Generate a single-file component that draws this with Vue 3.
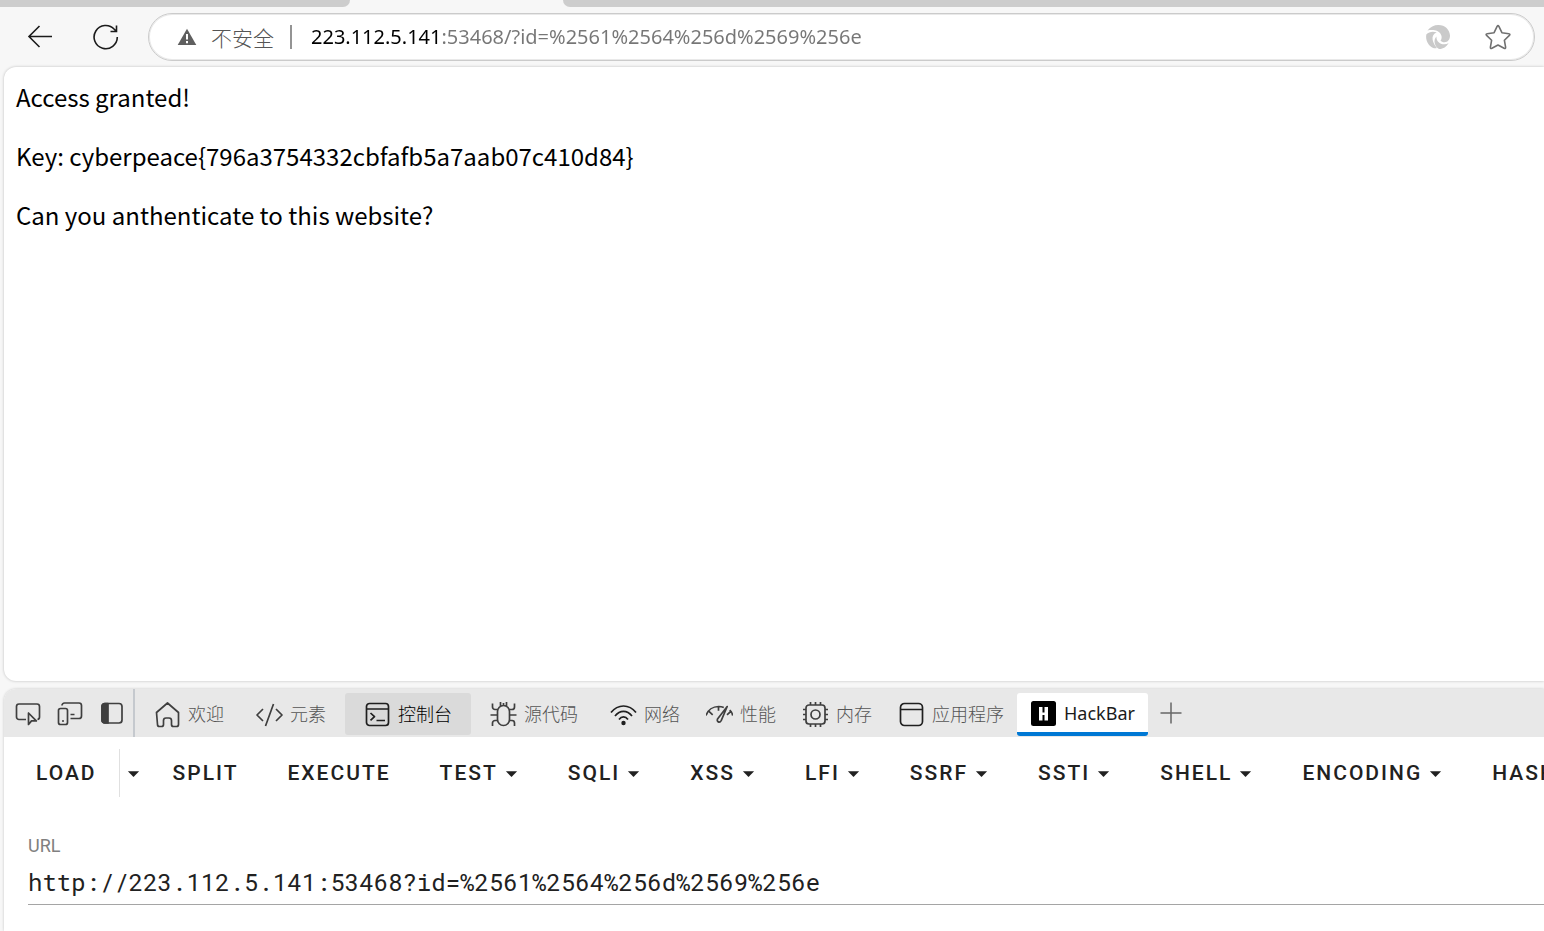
<script setup>
import { ref } from 'vue'

const address = ref('223.112.5.141:53468/?id=%2561%2564%256d%2569%256e')
const target = ref('http://223.112.5.141:53468?id=%2561%2564%256d%2569%256e')
const tabs = [
  { id: 'welcome', label: '欢迎' },
  { id: 'elements', label: '元素', wide: true },
  { id: 'console', label: '控制台', wide: true, shaded: true },
  { id: 'sources', label: '源代码', wide: true },
  { id: 'network', label: '网络' },
  { id: 'performance', label: '性能' },
  { id: 'memory', label: '内存' },
  { id: 'application', label: '应用程序' },
  { id: 'hackbar', label: 'HackBar', selected: true }
]
const actions = [
  { label: 'SPLIT' },
  { label: 'EXECUTE' },
  { label: 'TEST', menu: true },
  { label: 'SQLI', menu: true },
  { label: 'XSS', menu: true },
  { label: 'LFI', menu: true },
  { label: 'SSRF', menu: true },
  { label: 'SSTI', menu: true },
  { label: 'SHELL', menu: true },
  { label: 'ENCODING', menu: true },
  { label: 'HASHING', menu: true }
]
</script>

<template>
  <div class="browser">
    <div class="tab-edge"><i class="edge-left"></i><i class="edge-right"></i></div>
    <header class="toolbar">
      <button class="nav" aria-label="返回">
        <svg width="28" height="28" viewBox="0 0 28 28"><path d="M26 13.500H3M13.500 3L3 13.500l10.500 10.500" /></svg>
      </button>
      <button class="nav" aria-label="刷新">
        <svg width="28" height="28" viewBox="0 0 28 28"><path d="M25.300 14A11.600 11.600 0 1 1 22.300 6.300L24.500 8.500M24.500 2.500V8.500H18.500" /></svg>
      </button>
      <div class="omnibox">
        <button class="security">
          <svg width="20" height="18" viewBox="0 0 20 18"><path d="M10 .8L19.300 17H.7z" fill="#5f5f5f" /><path d="M10 6v5.500M10 13v2.300" stroke="#fff" stroke-width="2" /></svg>
          <span>不安全</span>
        </button>
        <i class="bar"></i>
        <input v-model="address" class="address" aria-label="地址" spellcheck="false" />
        <button class="chip" aria-label="扩展">
          <svg width="26" height="26" viewBox="0 0 26 26" fill="#cacaca">
            <path d="M2.500 6.500C5 2.700 9.500.8 13.500.9 20 1 24.800 5.500 25 11.500c0 4-2.200 6.700-5.500 6.700-1.800 0-3.200-.6-4-1.500 1-1.300 1.400-3 1-4.700C15.700 8.500 12 6.200 8.300 6.100 6.200 6 4.200 6.100 2.500 6.500z" />
            <path d="M1.300 10.500C4 7.700 8 7 11.700 8.500c-3.200 1-4.600 3.700-4.100 7 .5 3.300 2.200 6 4.300 8.500-1.300.4-2.600.3-3.800-.1C3.300 21.700.3 16.500 1.300 10.500z" />
            <path d="M11.500 12.500c-.6 4.600 3.500 8 8 7.800 1.600-.1 2.900-.5 4.100-1.300-2 4-5.800 6.200-9.600 6-4.200-2.200-6.300-8.800-2.500-12.500z" />
          </svg>
        </button>
        <button class="chip" aria-label="收藏">
          <svg width="26" height="26" viewBox="0 0 26 26" fill="none" stroke="#707070" stroke-width="1.600" stroke-linejoin="round"><path d="M12.100 2.400q.9-1.600 1.800 0l3 6.300 6.900 1q1.800.4.600 1.700l-5 4.900 1.200 6.900q.2 1.800-1.500 1.100L13 21l-6.100 3.300q-1.700.7-1.500-1.100l1.200-6.900-5-4.900q-1.200-1.300.6-1.700l6.900-1z" /></svg>
        </button>
      </div>
    </header>

    <main class="page">
      <p>Access granted!</p>
      <p>Key: cyberpeace{796a3754332cbfafb5a7aab07c410d84}</p>
      <p>Can you anthenticate to this website?</p>
    </main>

    <section class="devtools">
      <nav class="strip">
        <div class="tools">
          <button aria-label="检查">
            <svg width="26" height="26" viewBox="0 0 26 26"><path d="M11 19.500H4A2.500 2.500 0 0 1 1.500 17V6.500A2.500 2.500 0 0 1 4 4h18a2.500 2.500 0 0 1 2.500 2.500V17a2.500 2.500 0 0 1-2 2.500M13.500 13v11.500l3-3.600h4.800z" /></svg>
          </button>
          <button aria-label="设备">
            <svg width="26" height="26" viewBox="0 0 26 26"><path d="M5 5.500A2.500 2.500 0 0 1 7.500 3H22a2.500 2.500 0 0 1 2.500 2.500V16a2.500 2.500 0 0 1-2.500 2.500h-8.500M13.500 14.500h4M3.500 8.500h5a2 2 0 0 1 2 2v12a2 2 0 0 1-2 2h-5a2 2 0 0 1-2-2v-12a2 2 0 0 1 2-2zM5 21h2" /></svg>
          </button>
          <button aria-label="停靠">
            <svg width="26" height="26" viewBox="0 0 26 26"><rect x="3" y="3.500" width="20" height="19.500" rx="3" /><path d="M3 6A2.500 2.500 0 0 1 5.500 3.500H9V23H5.500A2.500 2.500 0 0 1 3 20.500z" fill="#3f3f3f" /></svg>
          </button>
        </div>
        <button v-for="t in tabs" :key="t.id" class="tab" :class="{ wide: t.wide, shaded: t.shaded, selected: t.selected }">
          <svg width="27" height="27" viewBox="0 0 27 27">
            <path v-if="t.id === 'welcome'" d="M2.500 11.500L13.500 2l11 9.500v12a2 2 0 0 1-2 2h-3a2 2 0 0 1-2-2v-4a2.500 2.500 0 0 0-2.500-2.500h-3a2.500 2.500 0 0 0-2.500 2.500v4a2 2 0 0 1-2 2h-2a2 2 0 0 1-2-2z" />
            <path v-else-if="t.id === 'elements'" d="M7 8L1 14l6 6M20 8l6 6-6 6M17.500 3l-8 22" />
            <path v-else-if="t.id === 'console'" d="M5.500 2.500h16a3 3 0 0 1 3 3v16a3 3 0 0 1-3 3h-16a3 3 0 0 1-3-3v-16a3 3 0 0 1 3-3zM2.500 8h22M6.500 12l4 3.700-4 3.700M12.500 19.500h8.500" />
            <path v-else-if="t.id === 'sources'" d="M13.500 4.500a6 6 0 0 1 6 6v8a6 6 0 0 1-12 0v-8a6 6 0 0 1 6-6zM10.500 5V1M13.500 4V2M16.500 5V1M7.500 8.500H5A2.500 2.500 0 0 1 2.500 6V2.500M19.500 8.500H22A2.500 2.500 0 0 0 24.500 6V2.500M7.500 14H.5M19.500 14h7M7.500 19.500H5A2.500 2.500 0 0 0 2.500 22v3M19.500 19.500H22a2.500 2.500 0 0 1 2.500 2.500v3" />
            <g v-else-if="t.id === 'network'" class="dark"><path d="M1 11.500C8 2.800 19 2.800 26 11.500M5 15c5-6.300 12-6.300 17 0M9 18.500c2.600-3.500 6.400-3.500 9 0" /><circle cx="13.500" cy="22" r="2.200" fill="#1f1f1f" stroke="none" /></g>
            <path v-else-if="t.id === 'performance'" d="M0 14.500C2 9 7 5.500 12.500 5.500c2 0 3.700.3 5.300 1M2.700 10.200l4 3.600M12.500 5.500v4.200M23.700 9c1.600 1.500 2.600 3.200 3 5.500M24.700 10.500L21 13.800M21.200 5.500L11.700 17.700c-1.600 3.200 2 4.800 3.600 1.600z" />
            <path v-else-if="t.id === 'memory'" d="M7 4h13a3 3 0 0 1 3 3v13a3 3 0 0 1-3 3H7a3 3 0 0 1-3-3V7a3 3 0 0 1 3-3zM13.500 9a4.500 4.500 0 1 1 0 9 4.500 4.500 0 0 1 0-9M8.500 4V1M13.500 4V1M18.500 4V1M8.500 26v-3M13.500 26v-3M18.500 26v-3M4 8.500H1M4 13.500H1M4 18.500H1M26 8.500h-3M26 13.500h-3M26 18.500h-3" />
            <path v-else-if="t.id === 'application'" class="dark" d="M6.500 2.500h14a4 4 0 0 1 4 4v14a4 4 0 0 1-4 4h-14a4 4 0 0 1-4-4v-14a4 4 0 0 1 4-4zM2.500 8.500h22" />
            <g v-else stroke="none"><rect x="1" y="2" width="25" height="25" rx="2.500" fill="#000" /><path d="M9 8h3.500v5.500h2V8H18v13.500h-3.500V16h-2v5.500H9z" fill="#fff" /></g>
          </svg>
          <span>{{ t.label }}</span>
        </button>
        <button class="add" aria-label="更多工具"><svg width="22" height="22" viewBox="0 0 22 22"><path d="M11 .5v21M.5 11h21" /></svg></button>
      </nav>

      <div class="actions">
        <button class="action">LOAD</button>
        <button class="more" aria-label="LOAD"><svg width="27" height="27" viewBox="0 0 24 24"><path d="M7 10l5 5 5-5z" /></svg></button>
        <button v-for="a in actions" :key="a.label" class="action">
          {{ a.label }}<svg v-if="a.menu" width="27" height="27" viewBox="0 0 24 24"><path d="M7 10l5 5 5-5z" /></svg>
        </button>
      </div>

      <div class="field">
        <label for="target">URL</label>
        <input id="target" v-model="target" spellcheck="false" />
      </div>
    </section>
  </div>
</template>

<style>
body { margin: 0; }
</style>

<style scoped>
* { box-sizing: border-box; }
button, input { border: 0; background: none; padding: 0; margin: 0; outline: 0; font: inherit; color: inherit; }
svg { display: block; flex: none; }
.browser {
  min-height: 100vh;
  display: flex;
  flex-direction: column;
  overflow: hidden;
  background: #f7f7f7;
  font-family: "Noto Sans", "Noto Sans CJK SC", sans-serif;
}
.tab-edge { display: flex; justify-content: space-between; gap: 213px; height: 7px; }
.edge-left { flex: 0 0 350px; background: #cdcdcd; border-bottom-right-radius: 10px; }
.edge-right { flex: 1; background: #cdcdcd; border-bottom-left-radius: 10px; }
.toolbar { display: flex; align-items: center; gap: 38px; height: 60px; padding: 0 9px 0 26px; }
.nav svg { fill: none; stroke: #1b1b1b; stroke-width: 1.600; }
.omnibox {
  flex: 1;
  min-width: 0;
  display: flex;
  align-items: center;
  height: 48px;
  margin-left: -10px;
  padding: 0 23px 0 28px;
  border: 1px solid #cbcbcb;
  border-radius: 24px;
  background: #fff;
  box-shadow: inset 0 0 0 1px #e9e9e9;
}
.security { display: flex; align-items: center; gap: 14px; font: 300 21px/30px "Noto Sans CJK SC", sans-serif; color: #555; }
.bar { width: 2px; height: 24px; margin: 0 19px 0 16px; background: #949494; }
.address {
  flex: 1;
  min-width: 0;
  font-size: 20px;
  line-height: 30px;
  color: transparent;
  background: linear-gradient(90deg, #000 128px, #767676 128px);
  background-clip: text;
  -webkit-background-clip: text;
}
.chip + .chip { margin-left: 34px; }
.page {
  flex: 1;
  margin-left: 4px;
  padding: 12px;
  background: #fff;
  border-radius: 12px 0 0 12px;
  box-shadow: 0 0 3px rgba(0, 0, 0, .24);
  font: 24px/35px "Noto Sans CJK SC", sans-serif;
  color: #000;
}
.page p { margin: 0 0 24px; }
.devtools {
  margin: 8px 0 0 4px;
  background: #fff;
  border-top-left-radius: 12px;
  box-shadow: 0 0 3px rgba(0, 0, 0, .2);
  overflow: hidden;
}
.strip { display: flex; height: 48px; background: #e8e8e8; }
.strip svg { fill: none; stroke: #3f3f3f; stroke-width: 1.700; stroke-linejoin: round; }
.strip .dark { stroke: #1f1f1f; }
.tools { display: flex; align-items: center; gap: 16px; width: 131px; padding-left: 11px; margin-right: 6px; border-right: 2px solid #c5c9ce; }
.tab {
  display: flex;
  align-items: center;
  gap: 7px;
  height: 42px;
  margin-top: 4px;
  padding: 0 13px;
  border-radius: 3px;
  white-space: nowrap;
  font: 300 18px/26px "Noto Sans CJK SC", sans-serif;
  color: #555;
}
.tab span { padding-bottom: 2px; }
.wide { padding: 0 19px; }
.strip .shaded svg { stroke: #1f1f1f; }
.shaded { background: #dadada; color: #000; }
.selected { height: 43px; background: #fff; border-bottom: 4px solid #0078d4; color: #1b1b1b; font: 18px/26px "Noto Sans", sans-serif; }
.selected span { padding-bottom: 0; }
.add { align-self: center; margin-left: 12px; }
.strip .add svg { stroke: #666; stroke-width: 1.500; }
.actions { display: flex; align-items: center; gap: 1px; height: 72px; padding-left: 8px; overflow: hidden; }
.actions svg { fill: #212121; }
.action {
  flex: none;
  display: flex;
  align-items: center;
  height: 48px;
  padding: 0 24px;
  font: 500 21px/30px Roboto, sans-serif;
  letter-spacing: 2px;
  color: #212121;
  white-space: nowrap;
}
.action svg { margin-right: -6px; }
.more { flex: none; height: 48px; border-left: 1px solid #e0e0e0; margin-left: -3px; margin-right: 1px; }
.field { display: flex; flex-direction: column; padding: 24px 0 26px 24px; }
.field label { font: 18px/26px Roboto, sans-serif; color: #808080; }
.field input { height: 46px; border-bottom: 1px solid #a5a5a5; font: 24px/45px "Roboto Mono", "DejaVu Sans Mono", monospace; color: #212121; }
</style>
